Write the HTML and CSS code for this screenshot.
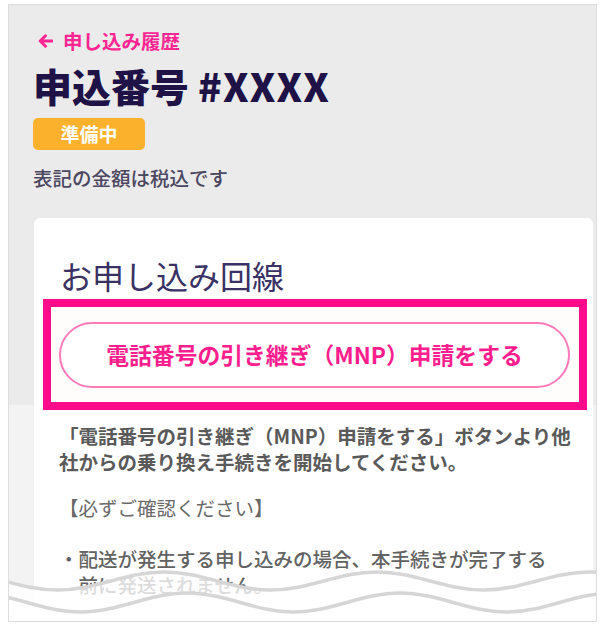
FILE: index.html
```html
<!DOCTYPE html>
<html lang="ja">
<head>
<meta charset="utf-8">
<title>申込番号</title>
<link rel="stylesheet" href="styles.css">
</head>
<body>
<div class="frame">
  <div class="header">
    <a class="back" href="#"><svg class="back-arrow" width="15" height="14" viewBox="0 0 15 14"><path d="M14 7H2.5M7.5 1.8L2.2 7l5.3 5.2" fill="none" stroke="#ff2592" stroke-width="3" stroke-linecap="round" stroke-linejoin="round"/></svg><span>申し込み履歴</span></a>
    <h1 class="title">申込番号 <span class="title-num">#XXXX</span></h1>
    <div class="badge">準備中</div>
    <p class="note">表記の金額は税込です</p>
  </div>
  <div class="card">
    <h2 class="card-title">お申し込み回線</h2>
    <div class="highlight">
      <button class="mnp-btn">電話番号の引き継ぎ（MNP）申請をする</button>
    </div>
    <p class="desc">「電話番号の引き継ぎ（MNP）申請をする」ボタンより他<br>社からの乗り換え手続きを開始してください。</p>
    <p class="confirm">【必ずご確認ください】</p>
    <p class="bullet"><span class="dot">・</span><span>配送が発生する申し込みの場合、本手続きが完了する<br>前に発送されません。</span></p>
  </div>
  <svg class="wave" width="587" height="60" viewBox="9 561 587 60">
    <path d="M -49 572 C -10.2 572 18.7 590 57.5 590 C 96.3 590 125.2 572 164 572 C 202.8 572 231.7 590 270.5 590 C 309.3 590 338.2 572 377 572 C 415.8 572 444.7 590 483.5 590 C 522.3 590 551.2 572 590 572 C 628.8 572 657.7 590 696.5 590 L 696.5 640 L -49 640 Z" fill="#ffffff" fill-opacity="0.78"/>
    <path d="M -26 593 C 12.8 593 41.7 612 80.5 612 C 119.3 612 148.2 593 187 593 C 225.8 593 254.7 612 293.5 612 C 332.3 612 361.2 593 400 593 C 438.8 593 467.7 612 506.5 612 C 545.3 612 574.2 593 613 593 L 613 640 L -26 640 Z" fill="#ffffff"/>
    <path d="M -49 572 C -10.2 572 18.7 590 57.5 590 C 96.3 590 125.2 572 164 572 C 202.8 572 231.7 590 270.5 590 C 309.3 590 338.2 572 377 572 C 415.8 572 444.7 590 483.5 590 C 522.3 590 551.2 572 590 572 C 628.8 572 657.7 590 696.5 590" fill="none" stroke="#d6d6d6" stroke-width="3.5"/>
    <path d="M -26 593 C 12.8 593 41.7 612 80.5 612 C 119.3 612 148.2 593 187 593 C 225.8 593 254.7 612 293.5 612 C 332.3 612 361.2 593 400 593 C 438.8 593 467.7 612 506.5 612 C 545.3 612 574.2 593 613 593" fill="none" stroke="#d6d6d6" stroke-width="3.5"/>
  </svg>
</div>
</body>
</html>
```
FILE: styles.css
```css
* { box-sizing: border-box; }
html, body { margin: 0; padding: 0; background: #ffffff; }
body {
  font-family: "Noto Sans CJK JP", "Noto Sans", sans-serif;
  width: 600px;
  height: 631px;
  overflow: hidden;
}
.frame {
  position: relative;
  margin: 4px 0 0 8px;
  width: 589px;
  height: 618px;
  border: 1px solid #dddddd;
  background: linear-gradient(#ebebeb 0, #ebebeb 400px, #f3f3f3 400px);
  overflow: hidden;
  display: flex;
  flex-direction: column;
}
.header {
  padding: 24px 0 0 24px;
  display: flex;
  flex-direction: column;
  align-items: flex-start;
}
.back {
  display: flex;
  align-items: center;
  height: 24px;
  padding-left: 5px;
  color: #ff2592;
  text-decoration: none;
  font-weight: 700;
  font-size: 19.5px;
  line-height: 24px;
}
.back-arrow { margin-right: 10px; }
.title {
  margin: 9px 0 0 0;
  font-size: 39px;
  line-height: 46px;
  font-weight: 900;
  color: #1e1246;
  letter-spacing: 0;
  white-space: nowrap;
}
.title-num {
  letter-spacing: 1.2px;
}
.badge {
  margin-top: 10px;
  width: 112px;
  height: 32px;
  border-radius: 5px;
  background: #fcb12c;
  color: #ffffff;
  font-weight: 700;
  font-size: 19px;
  line-height: 32px;
  text-align: center;
}
.note {
  margin: 16px 0 0 0;
  font-size: 19.5px;
  line-height: 24px;
  font-weight: 500;
  color: #4b4760;
}
.card {
  margin: 28px 0 0 25px;
  width: 559px;
  flex: 1 0 auto;
  background: #ffffff;
  border-radius: 6px 6px 0 0;
  padding-top: 37px;
}
.card-title {
  margin: 0 0 0 26px;
  font-size: 32px;
  line-height: 40px;
  font-weight: 400;
  color: #3a3264;
}
.highlight {
  margin: 4px 0 0 9px;
  width: 544px;
  height: 111px;
  border: 8px solid #ff0a8a;
  background: #fffdfb;
  padding: 15px 9px 0 8px;
}
.mnp-btn {
  display: block;
  width: 511px;
  height: 66px;
  border: 2px solid #ff7ab8;
  border-radius: 33px;
  background: #ffffff;
  color: #ff1e8e;
  font-family: "Noto Sans CJK JP", "Noto Sans", sans-serif;
  font-size: 22.8px;
  font-weight: 700;
  line-height: 1;
  padding: 0;
  text-align: center;
  white-space: nowrap;
}
.desc, .confirm, .bullet {
  margin: 0;
  padding-left: 25px;
  font-size: 19.5px;
  line-height: 26px;
  white-space: nowrap;
}
.desc {
  margin-top: 13px;
  font-weight: 700;
  color: #5a5a5a;
}
.confirm {
  margin-top: 20px;
  font-weight: 400;
  color: #6a6a6a;
}
.bullet {
  margin-top: 25px;
  display: flex;
  font-weight: 500;
  color: #626262;
}
.dot { flex: none; }
.wave {
  position: absolute;
  left: 0;
  bottom: 0;
  display: block;
}
```
